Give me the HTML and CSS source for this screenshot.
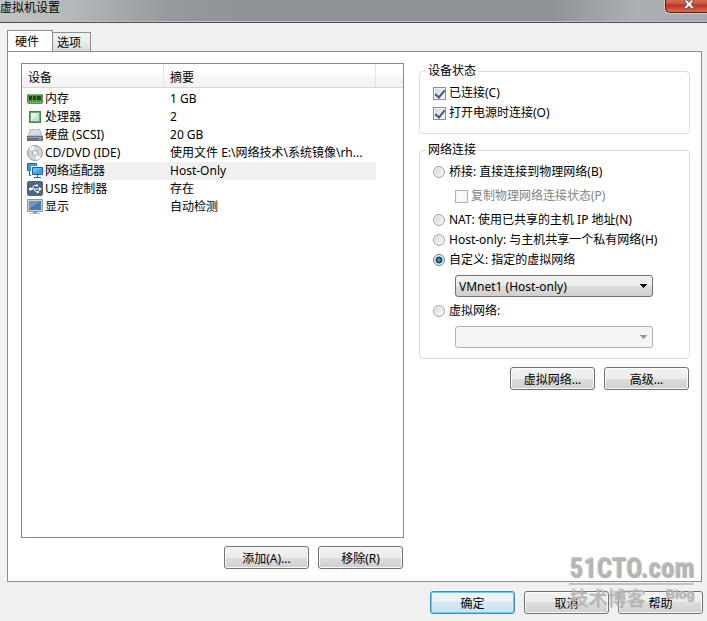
FILE: index.html
```html
<!DOCTYPE html>
<html lang="zh-CN">
<head>
    <meta charset="UTF-8">
    <meta name="viewport" content="width=device-width, initial-scale=1.0">
    <title>虚拟机设置</title>
    <link rel="stylesheet" href="styles.css">
</head>
<body>
    <header class="titlebar">
        <h1>虚拟机设置</h1>
        <button type="button" class="close" aria-label="关闭">
            <svg width="12" height="10" viewBox="0 0 12 10"><path d="M1 0h3l2 2.500 2-2.500h3L8 4l3.500 4.500H8L6 6 4 8.500H.5L4 4z" fill="#fff" stroke="#5b4a50" stroke-width=".8"/></svg>
        </button>
    </header>

    <main class="dialog">
        <nav class="tabs">
            <button type="button" class="tab active">硬件</button>
            <button type="button" class="tab">选项</button>
        </nav>

        <div class="panel">
            <section class="devices">
                <div class="list">
                    <table>
                        <colgroup>
                            <col class="col-icon">
                            <col class="col-name">
                            <col class="col-summary">
                            <col>
                        </colgroup>
                        <thead>
                            <tr><th colspan="2">设备</th><th>摘要</th><th></th></tr>
                        </thead>
                        <tbody>
                            <tr>
                                <td><svg width="16" height="16" viewBox="0 0 16 16"><path d="M0 3h16v9h-1v1H1v-1H0z" fill="#4c9a45"/><path d="M1 11.500h14" stroke="#c9cf7c" stroke-dasharray="1 1"/><path d="M2 5h3v4H2zM6 5h3v4H6zM10 5h4v4h-4z" fill="#26402a"/><path d="M0 3.500h16" stroke="#83bd72"/></svg></td>
                                <td>内存</td><td>1 GB</td><td></td>
                            </tr>
                            <tr>
                                <td><svg width="16" height="16" viewBox="0 0 16 16"><path d="M2 2h12v12H2z" fill="#3b8552"/><path d="M3 3h10v10H3z" fill="#69ad7b"/><path d="M4 4h8v8H4z" fill="#e6eee7"/><path d="M4 12l8-8v8z" fill="#cbdccf"/></svg></td>
                                <td>处理器</td><td>2</td><td></td>
                            </tr>
                            <tr>
                                <td><svg width="16" height="16" viewBox="0 0 16 16"><path d="M3 2h10l3 8H0z" fill="#b8bec6"/><path d="M4 3h8l2 5H2z" fill="#d9dde1"/><path d="M0 9h16v5H0z" fill="#66717e"/><path d="M1 10.500h14" stroke="#97a2ae"/><path d="M12 12h2" stroke="#b7e0ac"/></svg></td>
                                <td>硬盘 (SCSI)</td><td>20 GB</td><td></td>
                            </tr>
                            <tr>
                                <td><svg width="16" height="16" viewBox="0 0 16 16"><circle cx="8" cy="8" r="7.500" fill="#cfd3d8" stroke="#959ca4"/><path d="M8 8L2 3a8 8 0 0 1 5-2zM8 8l6 5a8 8 0 0 1-5 2z" fill="#f3f4f6"/><circle cx="8" cy="8" r="2.500" fill="#fff" stroke="#9ca4ad"/></svg></td>
                                <td>CD/DVD (IDE)</td><td>使用文件 E:\网络技术\系统镜像\rh...</td><td></td>
                            </tr>
                            <tr class="selected">
                                <td><svg width="16" height="16" viewBox="0 0 16 16"><path d="M.5.5h9v7h-9z" fill="#3c9be0" stroke="#2b659e"/><path d="M2.500 8v4.500H5" fill="none" stroke="#2b659e"/><path d="M4 3h12v10H4z" fill="#e9f3fa"/><path d="M5.500 4.500h10v7h-10z" fill="#3c9fe6" stroke="#285f97"/><path d="M6 5h9l-9 5z" fill="#6bbcf2"/><path d="M10.500 12v2M7 14.500h7" stroke="#285f97"/></svg></td>
                                <td>网络适配器</td><td>Host-Only</td><td></td>
                            </tr>
                            <tr>
                                <td><svg width="16" height="16" viewBox="0 0 16 16"><rect width="16" height="15" y="0" rx="2" fill="#4e6680"/><g fill="none" stroke="#fff"><path d="M3 8h9M5 8l2-3.500h2M7 8l2 3h2"/></g><circle cx="3.500" cy="8" r="1.600" fill="#fff"/><path d="M12 6l3 2-3 2zM9 3.500h2v2H9zM10 10h2v2h-2z" fill="#fff"/></svg></td>
                                <td>USB 控制器</td><td>存在</td><td></td>
                            </tr>
                            <tr>
                                <td><svg width="16" height="16" viewBox="0 0 16 16"><path d="M.5.5h15v12H.5z" fill="#cbd3db" stroke="#8797a8"/><path d="M2 2h12v9H2z" fill="#4a7aa6"/><path d="M2 2h12L2 10z" fill="#6c99c0"/><path d="M6 13h4v1H6z" fill="#8998a7"/><path d="M3 14.500h10" stroke="#a9b5c0"/></svg></td>
                                <td>显示</td><td>自动检测</td><td></td>
                            </tr>
                        </tbody>
                    </table>
                </div>
                <div class="actions">
                    <button type="button" class="btn">添加(A)...</button>
                    <button type="button" class="btn">移除(R)</button>
                </div>
            </section>

            <section class="settings">
                <fieldset>
                    <legend>设备状态</legend>
                    <label class="option"><input type="checkbox" checked>已连接(C)</label>
                    <label class="option"><input type="checkbox" checked>打开电源时连接(O)</label>
                </fieldset>

                <fieldset>
                    <legend>网络连接</legend>
                    <label class="option"><input type="radio" name="net">桥接: 直接连接到物理网络(B)</label>
                    <label class="option sub"><input type="checkbox" disabled>复制物理网络连接状态(P)</label>
                    <label class="option"><input type="radio" name="net">NAT: 使用已共享的主机 IP 地址(N)</label>
                    <label class="option"><input type="radio" name="net">Host-only: 与主机共享一个私有网络(H)</label>
                    <label class="option"><input type="radio" name="net" checked>自定义: 指定的虚拟网络</label>
                    <select class="combo" aria-label="指定的虚拟网络">
                        <option>VMnet1 (Host-only)</option>
                    </select>
                    <label class="option"><input type="radio" name="net">虚拟网络:</label>
                    <select class="combo" aria-label="虚拟网络" disabled></select>
                </fieldset>

                <div class="actions">
                    <button type="button" class="btn">虚拟网络...</button>
                    <button type="button" class="btn">高级...</button>
                </div>
            </section>
        </div>
    </main>

    <footer class="footer">
        <button type="button" class="btn default">确定</button>
        <button type="button" class="btn">取消</button>
        <button type="button" class="btn">帮助</button>
    </footer>

    <div class="watermark">
        <div class="site">51CTO.com</div>
        <div class="blog"><span>技术博客</span><small>Blog</small></div>
    </div>
</body>
</html>
```
FILE: styles.css
```css
* {
    box-sizing: border-box;
}
body {
    margin: 0;
    min-height: 100vh;
    display: flex;
    flex-direction: column;
    position: relative;
    background-color: #f0f0f0;
    color: #000;
    font: 12px/16px "Noto Sans", "Noto Sans CJK SC", sans-serif;
}
button, select, input {
    font: inherit;
    color: inherit;
    margin: 0;
}
svg {
    display: block;
}

/* title bar */
.titlebar {
    display: flex;
    justify-content: space-between;
    align-items: flex-start;
    height: 23px;
    border-bottom: 1px solid #4c5156;
    background: linear-gradient(90deg, #bfc4c5, #b4b9bb 10%, #949a9d 24%, #8d9396 35%, #8d9396 78%, #abb0b4 90%, #a5aaae);
    box-shadow: inset 0 -1px #b9bec1;
}
.titlebar h1 {
    margin: 0;
    font-size: 12px;
    font-weight: normal;
}
.close {
    width: 42px;
    height: 13px;
    padding: 0 0 4px 17px;
    border: 1px solid #4b2420;
    border-width: 0 0 1px 1px;
    border-radius: 0 0 0 5px;
    background: linear-gradient(#d0705c, #c9523c 35%, #b9301b 40%, #dd6c50);
    box-shadow: 0 0 0 1px #d7c9c8;
}

/* tabs */
.dialog {
    flex: 1;
    display: flex;
    flex-direction: column;
    padding: 7px 5px 0 7px;
}
.tabs {
    display: flex;
    align-items: flex-end;
    height: 22px;
    margin-bottom: -1px;
}
.tab {
    height: 20px;
    padding: 2px 9px 0 4px;
    border: 1px solid #8c8e94;
    border-left: 0;
    background: linear-gradient(#f3f3f3, #ececec 50%, #dadada);
}
.tab.active {
    height: 22px;
    padding: 0 13px 0 7px;
    border-left: 1px solid #8c8e94;
    border-bottom: 0;
    background: #fff;
}
.panel {
    flex: 1;
    display: flex;
    gap: 15px;
    padding: 11px 11px 12px 13px;
    border: 1px solid #8c8e94;
    background-color: #fff;
}

/* device list */
.devices {
    flex: 1;
    display: flex;
    flex-direction: column;
}
.list {
    flex: 1;
    border: 1px solid #828790;
}
table {
    width: 100%;
    table-layout: fixed;
    border-collapse: separate;
    border-spacing: 0;
}
.col-icon {
    width: 21px;
}
.col-name {
    width: 121px;
}
.col-summary {
    width: 212px;
}
th {
    height: 24px;
    padding: 5px 6px 0;
    border-right: 1px solid #e2e3e5;
    border-bottom: 1px solid #d5d5d5;
    background: linear-gradient(#fff 45%, #f7f8f9 50%, #f1f2f4);
    font-weight: normal;
    text-align: left;
}
tbody::before {
    content: "";
    display: block;
    height: 2px;
}
th:last-child {
    border-right: 0;
}
td {
    height: 18px;
    padding: 0 0 0 2px;
    white-space: nowrap;
}
td:first-child {
    padding-left: 5px;
}
td:nth-child(3) {
    padding-left: 6px;
}
.selected td:nth-child(2),
.selected td:nth-child(3) {
    background-color: #f0f0f0;
}

/* buttons */
.actions {
    display: flex;
    justify-content: flex-end;
    gap: 9px;
    margin-top: 8px;
    padding-right: 1px;
}
.btn {
    width: 85px;
    height: 23px;
    padding: 2px 0 0;
    border: 1px solid #707070;
    border-radius: 3px;
    background: linear-gradient(#f3f3f3, #ebebeb 50%, #dddddd 50%, #cfcfcf);
    box-shadow: inset 0 0 0 1px #fbfbfb;
}
.btn.default {
    border-color: #3c8fb8;
    background: linear-gradient(#f0f6f9, #e6f2f8 50%, #d6eaf3 50%, #c8e2ee);
    box-shadow: inset 0 0 0 1px #5fd0f2;
}
.footer {
    display: flex;
    justify-content: flex-end;
    gap: 9px;
    padding: 9px 4px 7px;
}

/* settings */
.settings {
    width: 271px;
}
fieldset {
    min-width: 0;
    margin: 0 0 8px;
    padding: 4px 13px 10px;
    border: 1px solid #dcdcdc;
    border-radius: 4px;
}
legend {
    margin-left: -7px;
    padding: 0 2px;
}
.option {
    display: flex;
    align-items: center;
    gap: 3px;
    height: 20px;
    white-space: nowrap;
}
.option.sub {
    margin: 4px 0 4px 22px;
    color: #838383;
}
input {
    appearance: none;
    flex: none;
    display: grid;
    place-items: center;
    width: 13px;
    height: 13px;
    border: 1px solid #8e8f8f;
    background: linear-gradient(135deg, #d2d6da, #fafafa);
    box-shadow: inset 0 0 0 1px #f4f4f4;
}
input[type="radio"] {
    width: 12px;
    height: 12px;
    margin-right: 1px;
    border-color: #a0a2a4;
    border-radius: 50%;
}
input[type="radio"]:checked {
    border-color: #5d7f95;
    background: radial-gradient(circle at 50% 50%, #6fc0de 0, #17648b 2px, #123f5c 3px, #eef2f4 4px);
}
input[type="checkbox"]:checked::before {
    content: "";
    width: 4px;
    height: 8px;
    margin-bottom: 2px;
    border: solid #3f5595;
    border-width: 0 2px 2px 0;
    rotate: 40deg;
}
input:disabled {
    border-color: #b1b1b1;
    background: #fbfbfb;
}
.combo {
    appearance: none;
    display: block;
    width: 198px;
    height: 22px;
    margin: 5px 0 4px 22px;
    padding: 1px 20px 0 3px;
    border: 1px solid #707070;
    border-radius: 3px;
    background:
        linear-gradient(45deg, transparent 50%, #000 50%) right 8px center / 4px 4px no-repeat,
        linear-gradient(-45deg, transparent 50%, #000 50%) right 4px center / 4px 4px no-repeat,
        linear-gradient(#f2f2f2, #ebebeb 50%, #dddddd 50%, #cfcfcf);
}
.combo:disabled {
    margin-bottom: 0;
    border-color: #adb2b5;
    opacity: 1;
    background:
        linear-gradient(45deg, transparent 50%, #999 50%) right 8px center / 4px 4px no-repeat,
        linear-gradient(-45deg, transparent 50%, #999 50%) right 4px center / 4px 4px no-repeat,
        #f4f4f4;
}

/* watermark */
.watermark {
    position: absolute;
    right: 13px;
    bottom: 10px;
    width: 125px;
    color: rgba(185, 185, 185, 0.8);
    text-shadow: 1px 1px 1px #aaa;
    pointer-events: none;
}
.site {
    border-bottom: 2px solid #c0c0c0;
    font: bold 27px/30px "Roboto Condensed", "Liberation Sans", sans-serif;
}
.blog {
    display: flex;
    justify-content: space-between;
    font-size: 19px;
    line-height: 26px;
}
.blog small {
    font: bold 13px/18px "Liberation Sans", sans-serif;
}
```
